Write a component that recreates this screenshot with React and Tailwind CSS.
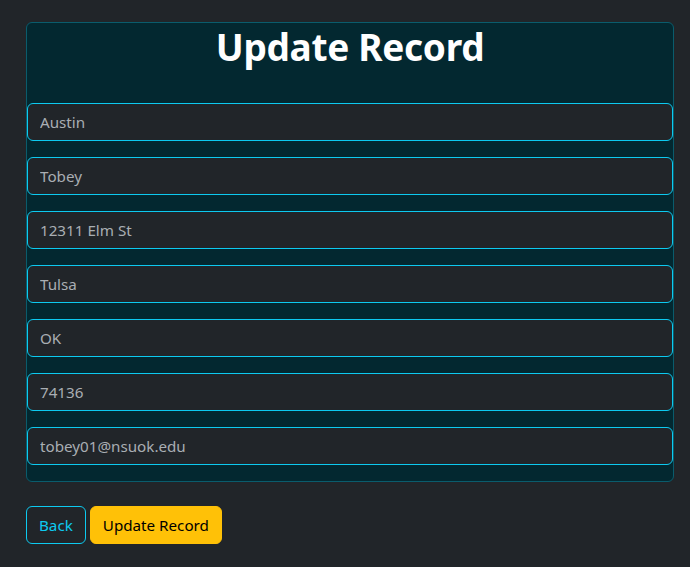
import React from 'react';

const fields = ['Austin', 'Tobey', '12311 Elm St', 'Tulsa', 'OK', '74136', 'tobey01@nsuok.edu'];

export default function App() {
    return (
        <div className="min-h-[567px] bg-[#212529] pl-[26px] pr-4 pt-[22px] text-[#dee2e6]" style={{ fontFamily: '"Segoe UI", "Noto Sans", sans-serif' }}>
            {/* Card */}
            <div className="rounded-[6px] border border-[#0a5c6c] bg-[#032830] pb-4">
                <h1 className="mb-8 text-center text-[37px] font-bold leading-[48px] tracking-[-0.3px] text-white">Update Record</h1>
                {fields.map((value, i) => (
                    <div key={i} className="mb-4 last:mb-0">
                        <input
                            readOnly
                            defaultValue={value}
                            className="block h-[38px] w-full rounded-[6px] border border-[#0dcaf0] bg-[#212529] px-3 text-[15.2px] text-[#a9aeb3] outline-none"
                        />
                    </div>
                ))}
            </div>

            <div className="mt-6 flex gap-1">
                <button className="h-[38px] rounded-[6px] border border-[#0dcaf0] px-3 text-[15.2px] text-[#0dcaf0]">Back</button>
                <button className="h-[38px] rounded-[6px] border border-[#ffc107] bg-[#ffc107] px-3 text-[15.2px] text-black">Update Record</button>
            </div>
        </div>
    );
}
